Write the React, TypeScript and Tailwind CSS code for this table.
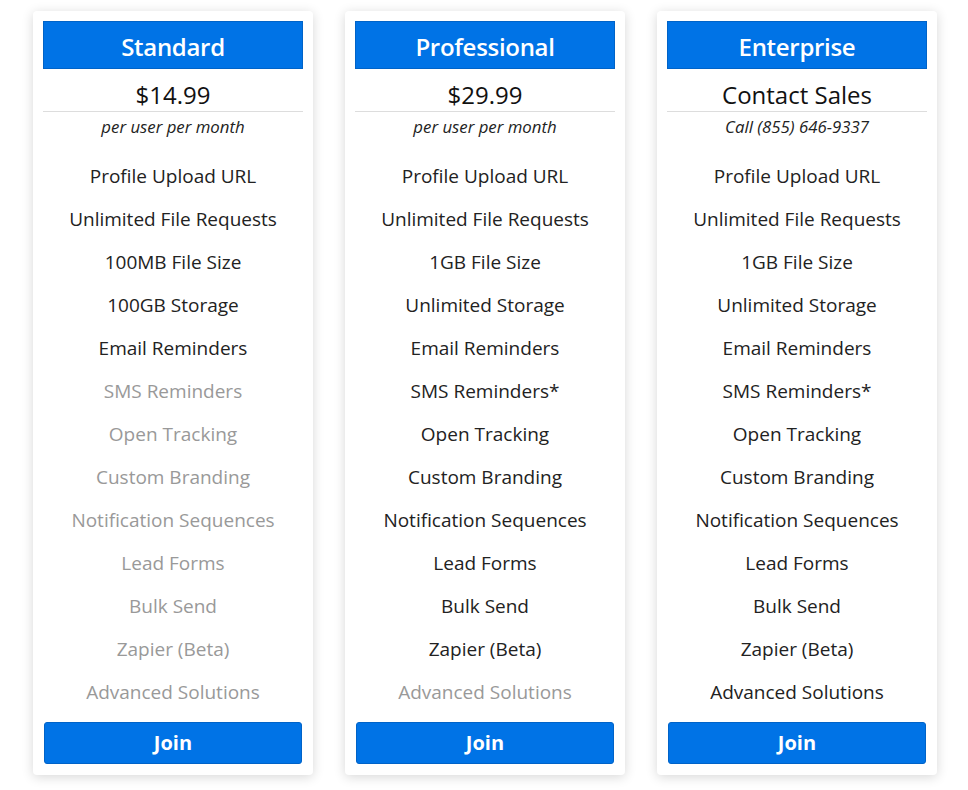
import React from "react";

type Feature = { label: string; on: boolean };

const plans: { title: string; price: string; sub: string; features: Feature[] }[] = [
  {
    title: "Standard",
    price: "$14.99",
    sub: "per user per month",
    features: [
      { label: "Profile Upload URL", on: true },
      { label: "Unlimited File Requests", on: true },
      { label: "100MB File Size", on: true },
      { label: "100GB Storage", on: true },
      { label: "Email Reminders", on: true },
      { label: "SMS Reminders", on: false },
      { label: "Open Tracking", on: false },
      { label: "Custom Branding", on: false },
      { label: "Notification Sequences", on: false },
      { label: "Lead Forms", on: false },
      { label: "Bulk Send", on: false },
      { label: "Zapier (Beta)", on: false },
      { label: "Advanced Solutions", on: false },
    ],
  },
  {
    title: "Professional",
    price: "$29.99",
    sub: "per user per month",
    features: [
      { label: "Profile Upload URL", on: true },
      { label: "Unlimited File Requests", on: true },
      { label: "1GB File Size", on: true },
      { label: "Unlimited Storage", on: true },
      { label: "Email Reminders", on: true },
      { label: "SMS Reminders*", on: true },
      { label: "Open Tracking", on: true },
      { label: "Custom Branding", on: true },
      { label: "Notification Sequences", on: true },
      { label: "Lead Forms", on: true },
      { label: "Bulk Send", on: true },
      { label: "Zapier (Beta)", on: true },
      { label: "Advanced Solutions", on: false },
    ],
  },
  {
    title: "Enterprise",
    price: "Contact Sales",
    sub: "Call (855) 646-9337",
    features: [
      { label: "Profile Upload URL", on: true },
      { label: "Unlimited File Requests", on: true },
      { label: "1GB File Size", on: true },
      { label: "Unlimited Storage", on: true },
      { label: "Email Reminders", on: true },
      { label: "SMS Reminders*", on: true },
      { label: "Open Tracking", on: true },
      { label: "Custom Branding", on: true },
      { label: "Notification Sequences", on: true },
      { label: "Lead Forms", on: true },
      { label: "Bulk Send", on: true },
      { label: "Zapier (Beta)", on: true },
      { label: "Advanced Solutions", on: true },
    ],
  },
];

export default function App() {
  return (
    <div
      className="min-h-[790px] bg-white pl-[33px] pt-[11px]"
      style={{ fontFamily: '"Open Sans", "Noto Sans", sans-serif' }}
    >
      <div className="flex gap-[32px]">
        {plans.map((p) => (
          <div
            key={p.title}
            className="w-[280px] rounded-[4px] bg-white px-[10px] pt-[10px] pb-[11px] shadow-[0_2px_12px_rgba(0,0,0,0.16)]"
          >
            <div className="flex h-[48px] items-center justify-center border border-[#0063c8] bg-[#0073e6] pt-[3px] text-[24px] font-semibold tracking-[-0.3px] text-white">
              {p.title}
            </div>
            <div className="pt-[12px] text-center text-[24px] leading-[28px] font-medium text-[#111]">
              {p.price}
            </div>
            <div className="mt-[2px] h-px bg-[#dddddd]" />
            <div className="mt-[4px] text-center text-[16.8px] italic leading-[22px] text-[#222]">
              {p.sub}
            </div>
            <div className="mt-[17px] flex flex-col">
              {p.features.map((f) => (
                <div
                  key={f.label}
                  className={`flex h-[43px] items-center justify-center text-[19px] ${
                    f.on ? "text-[#222]" : "text-[#999]"
                  }`}
                >
                  {f.label}
                </div>
              ))}
            </div>
            <button className="mx-[1px] mt-[8px] flex h-[42px] w-[258px] items-center justify-center rounded-[3px] border border-[#0063c8] bg-[#0073e6] text-[20px] font-bold text-white">
              Join
            </button>
          </div>
        ))}
      </div>
    </div>
  );
}
